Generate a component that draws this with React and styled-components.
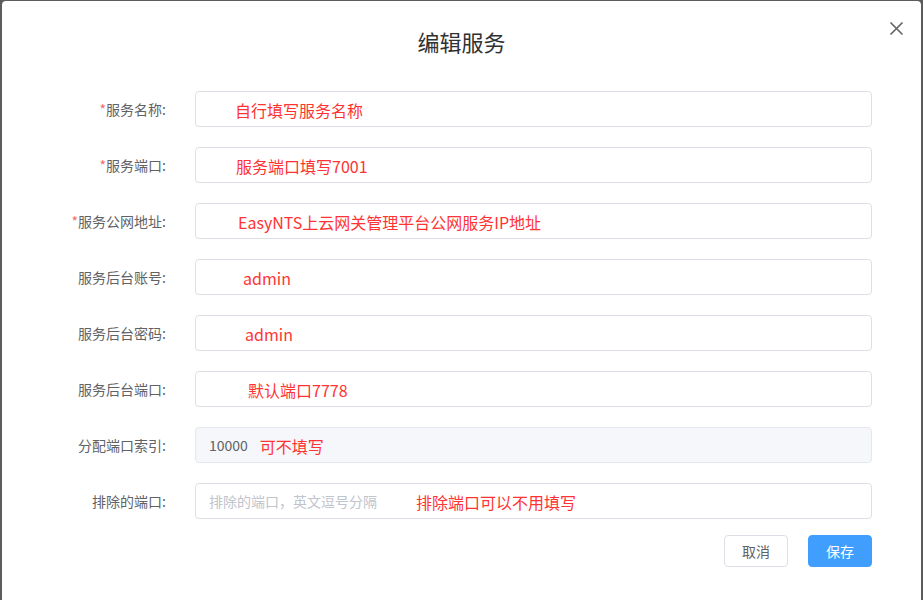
import React from "react";
import styled, { createGlobalStyle } from "styled-components";

const Global = createGlobalStyle`
  html, body { margin: 0; padding: 0; }
  body {
    background: #5c5c5c;
    font-family: "Noto Sans CJK SC", "Noto Sans", "Liberation Sans", sans-serif;
    overflow: hidden;
  }
`;

const Overlay = styled.div`
  height: 600px;
  padding: 1px 2px 0 2px;
  box-sizing: border-box;
  overflow: hidden;
`;

const Dialog = styled.div`
  position: relative;
  background: #fff;
  border-radius: 4px;
  height: 640px;
  display: flex;
  flex-direction: column;
`;

const Header = styled.div`
  height: 90px;
  display: flex;
  justify-content: center;
  padding-top: 25px;
  box-sizing: border-box;
`;

const Title = styled.h2`
  margin: 0;
  font-size: 22px;
  line-height: 30px;
  font-weight: 400;
  color: #303133;
`;

const Close = styled.button`
  position: absolute;
  top: 18px;
  right: 16px;
  width: 18px;
  height: 18px;
  padding: 0;
  border: none;
  background: transparent;
  display: flex;
  align-items: center;
  justify-content: center;
`;

const Form = styled.div`
  display: flex;
  flex-direction: column;
  gap: 20px;
  padding-right: 49px;
`;

const Row = styled.div`
  display: grid;
  grid-template-columns: 164px 1fr;
  column-gap: 29px;
  align-items: center;
  height: 36px;
`;

const Label = styled.label`
  text-align: right;
  font-size: 14px;
  color: #606266;
  white-space: nowrap;
`;

const Star = styled.span`
  color: #f56c6c;
`;

const Field = styled.div`
  height: 36px;
  box-sizing: border-box;
  border: 1px solid ${p => (p.$disabled ? "#e4e7ed" : "#dcdfe6")};
  background: ${p => (p.$disabled ? "#f5f7fa" : "#fff")};
  border-radius: 4px;
  display: flex;
  align-items: center;
  padding-left: ${p => p.$indent - 1}px;
  white-space: nowrap;
`;

const Note = styled.span`
  color: #ff3333;
  font-size: 16px;
  margin-left: ${p => p.$gap || 0}px;
  position: relative;
  top: 1px;
`;

const Value = styled.span`
  color: #606266;
  font-size: 14px;
`;

const Placeholder = styled.span`
  color: #c0c4cc;
  font-size: 14px;
`;

const Footer = styled.div`
  display: flex;
  justify-content: flex-end;
  gap: 20px;
  padding: 16px 49px 0 0;
`;

const Button = styled.button`
  width: 64px;
  height: 32px;
  border-radius: 4px;
  font-family: inherit;
  font-size: 14px;
  padding: 0;
  border: 1px solid ${p => (p.$primary ? "#409eff" : "#dcdfe6")};
  background: ${p => (p.$primary ? "#409eff" : "#fff")};
  color: ${p => (p.$primary ? "#fff" : "#606266")};
`;

const rows = [
  { label: "服务名称", req: true, indent: 40, note: "自行填写服务名称" },
  { label: "服务端口", req: true, indent: 41, note: "服务端口填写7001" },
  { label: "服务公网地址", req: true, indent: 43, note: "EasyNTS上云网关管理平台公网服务IP地址" },
  { label: "服务后台账号", indent: 48, note: "admin" },
  { label: "服务后台密码", indent: 50, note: "admin" },
  { label: "服务后台端口", indent: 53, note: "默认端口7778" },
];

export default function App() {
  return (
    <>
      <Global />
      <Overlay>
        <Dialog>
          <Header>
            <Title>编辑服务</Title>
          </Header>
          <Close aria-label="close">
            <svg width="15" height="15" viewBox="0 0 15 15">
              <path d="M1.5 1.5 L13.5 13.5 M13.5 1.5 L1.5 13.5" stroke="#606266" strokeWidth="1.6" fill="none" />
            </svg>
          </Close>
          <Form>
            {rows.map(r => (
              <Row key={r.label}>
                <Label>
                  {r.req && <Star>*</Star>}
                  {r.label}:
                </Label>
                <Field $indent={r.indent}>
                  <Note>{r.note}</Note>
                </Field>
              </Row>
            ))}
            <Row>
              <Label>分配端口索引:</Label>
              <Field $indent={14} $disabled>
                <Value>10000</Value>
                <Note $gap={12}>可不填写</Note>
              </Field>
            </Row>
            <Row>
              <Label>排除的端口:</Label>
              <Field $indent={14}>
                <Placeholder>排除的端口，英文逗号分隔</Placeholder>
                <Note $gap={39}>排除端口可以不用填写</Note>
              </Field>
            </Row>
          </Form>
          <Footer>
            <Button>取消</Button>
            <Button $primary>保存</Button>
          </Footer>
        </Dialog>
      </Overlay>
    </>
  );
}
